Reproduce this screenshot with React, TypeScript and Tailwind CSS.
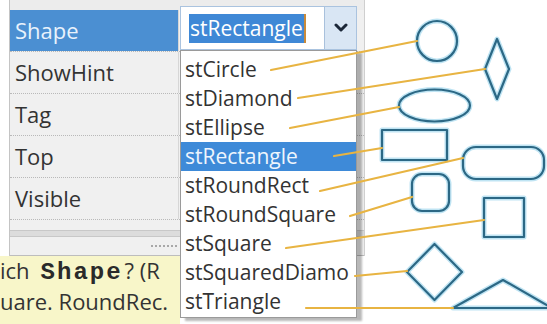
import React from "react";

const rows = ["Shape", "ShowHint", "Tag", "Top", "Visible"];
const items = [
  "stCircle",
  "stDiamond",
  "stEllipse",
  "stRectangle",
  "stRoundRect",
  "stRoundSquare",
  "stSquare",
  "stSquaredDiamo",
  "stTriangle",
];

function Shapes() {
  const lines: [number, number, number, number][] = [
    [271, 70, 417, 41],
    [298, 98, 485, 69],
    [290, 128, 399, 107],
    [334, 156, 382, 148],
    [320, 191, 463, 158],
    [350, 216, 412, 197],
    [286, 248, 484, 220],
    [355, 276, 407, 271],
    [306, 308, 453, 308],
  ];
  const shapes = (
    <>
      <circle cx={437} cy={41} r={20} />
      <polygon points="497,39 509,69 497,99 485,69" />
      <ellipse cx={434.5} cy={105.5} rx={35.5} ry={16} />
      <rect x={382} y={130} width={65} height={30} />
      <rect x={463} y={147} width={81} height={32} rx={13} />
      <rect x={412} y={174} width={37} height={37} rx={10} />
      <rect x={484} y={198} width={40} height={39} />
      <polygon points="434.5,244 462,272 434.5,300 407,272" />
      <polygon points="453,308 503,280 552,308" />
    </>
  );
  return (
    <svg
      className="absolute inset-0 pointer-events-none"
      width={547}
      height={324}
      viewBox="0 0 547 324"
    >
      <g fill="none" stroke="#bfe4f3" strokeWidth={5} strokeLinejoin="round">
        {shapes}
      </g>
      <g fill="none" stroke="#2c6885" strokeWidth={2.2} strokeLinejoin="round">
        {shapes}
      </g>
      <g stroke="#e8b442" strokeWidth={2.2} strokeLinecap="round">
        {lines.map((l, i) => (
          <line key={i} x1={l[0]} y1={l[1]} x2={l[2]} y2={l[3]} />
        ))}
      </g>
    </svg>
  );
}

export default function App() {
  return (
    <div className="relative w-[547px] h-[324px] bg-white overflow-hidden font-['Open_Sans',sans-serif] text-[#333]">
      <div className="flex h-full">
        <div className="w-[365px] flex flex-col">
          <div className="ml-[9px] flex-1 flex flex-col bg-[#f0f0f0] border-l border-[#c4c4c4] border-r border-r-[#cfcfcf]">
            <div className="h-[10px] bg-[#ececec]" />
            {rows.map((r, i) => (
              <div
                key={r}
                className="flex h-[42px] border-b border-dotted border-[#b9b9b9]"
              >
                <div
                  className={
                    i === 0
                      ? "w-[168px] pl-[5px] flex items-center text-[22px] bg-[#4b8fd2] text-[#e8f2fc]"
                      : "w-[168px] pl-[5px] flex items-center text-[22px] text-[#333]"
                  }
                >
                  {r}
                </div>
                <div className="flex-1 border-l border-[#d6d6d6]" />
              </div>
            ))}
            <div className="h-[10px]" />
            <div className="h-[7px] bg-[#dcdcdc] border-y border-[#c8c8c8]" />
            <div className="h-[18px] flex items-center justify-start pl-[141px]">
              <div className="w-[26px] border-t-2 border-dotted border-[#a8a8a8]" />
            </div>
            <div className="h-[1px] bg-[#bdbdbd]" />
          </div>
          <div className="h-[68px] w-[180px] bg-[#f8f6c9] overflow-hidden">
            <div className="text-[22px] leading-[29px] whitespace-nowrap text-[#333]">
              <div>
                ich
                <span className="ml-[11px] mr-[2px] [font-family:'Liberation_Mono',monospace] font-bold text-[24px] tracking-[2px] text-[#2a2a2a]">
                  Shape
                </span>
                ? (R
              </div>
              <div>uare. RoundRec.</div>
            </div>
          </div>
        </div>
        <div className="flex-1 bg-white" />
      </div>

      {/* combo box */}
      <div className="absolute left-[180px] top-[6px] w-[177px] h-[44px] flex border border-[#aac3df] bg-white">
        <div className="flex-1 flex items-center pl-[8px]">
          <span className="bg-[#3f88d6] text-white text-[21px] leading-[29px] px-[1px] border-r-2 border-[#c98a3a]">
            stRectangle
          </span>
        </div>
        <div className="w-[32px] flex items-center justify-center bg-[#d9e6f4] border-l border-[#a9c1dc]">
          <svg width="14" height="10" viewBox="0 0 14 10">
            <path
              d="M2 2 L7 7 L12 2"
              fill="none"
              stroke="#1b2738"
              strokeWidth="3"
              strokeLinecap="round"
              strokeLinejoin="round"
            />
          </svg>
        </div>
      </div>

      {/* dropdown list */}
      <div className="absolute left-[180px] top-[50px] w-[177px] h-[268px] bg-white border border-[#9a9a9a] shadow-[5px_3px_2px_rgba(0,0,0,0.28)] pt-[4px]">
        {items.map((it) => (
          <div
            key={it}
            className={
              it === "stRectangle"
                ? "h-[29px] pl-[4px] flex items-center text-[21px] bg-[#3e8ad8] text-[#eef5fd] whitespace-nowrap overflow-hidden"
                : "h-[29px] pl-[4px] flex items-center text-[21px] text-[#333] whitespace-nowrap overflow-hidden"
            }
          >
            {it}
          </div>
        ))}
      </div>

      <Shapes />
    </div>
  );
}
